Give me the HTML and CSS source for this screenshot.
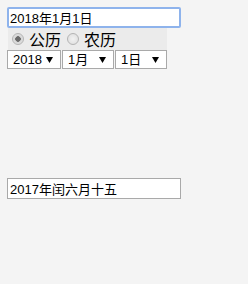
FILE: index.html
```
<!DOCTYPE html>
<html lang="zh">
<head>
  <meta charset="UTF-8" />
  <meta name="viewport" content="width=device-width, initial-scale=1.0"/>
  <link rel="stylesheet" href="styles.css">
</head>
<body>
  <div class="picker">
    <input type="text" class="date-input focused" value="2018年1月1日">
    <div class="calendar-type">
      <label><input type="radio" name="cal" checked>公历</label>
      <label><input type="radio" name="cal">农历</label>
    </div>
    <div class="selects">
      <select class="sel-year"><option>2018</option></select>
      <select class="sel-month"><option>1月</option></select>
      <select class="sel-day"><option>1日</option></select>
    </div>
  </div>
  <div class="lunar">
    <input type="text" class="date-input" value="2017年闰六月十五">
  </div>
</body>
</html>
```
FILE: styles.css
```
body {
  background: #f4f4f4;
  margin: 0;
  padding: 7px;
  font-family: "Liberation Sans", "Noto Sans CJK SC", sans-serif;
  color: #000;
}
.picker {
  width: 174px;
}
.date-input {
  box-sizing: border-box;
  width: 174px;
  height: 21px;
  margin: 0;
  padding: 0 2px;
  font-family: "Liberation Sans", "Noto Sans CJK SC", sans-serif;
  font-size: 13px;
  border: 1px solid #a9a9a9;
  background: #fff;
  color: #000;
  outline: none;
}
.date-input.focused {
  border: 2px solid #8eb3ec;
  border-radius: 2px;
  padding: 0 1px;
}
.calendar-type {
  width: 159px;
  height: 22px;
  margin-left: 1px;
  background: #ebebeb;
  display: flex;
  align-items: center;
  font-size: 16px;
}
.calendar-type label {
  display: flex;
  align-items: center;
  margin-right: 2px;
}
.calendar-type input {
  appearance: none;
  -webkit-appearance: none;
  box-sizing: border-box;
  width: 12px;
  height: 12px;
  margin: 0 5px 0 4px;
  border: 1px solid #b4b4b4;
  border-radius: 50%;
  background: radial-gradient(circle, #f2f2f2 0%, #dcdcdc 100%);
}
.calendar-type input:checked {
  background: radial-gradient(circle, #6a6a6a 0, #6a6a6a 2.5px, #d6d6d6 3px, #e6e6e6 100%);
}
.selects {
  display: flex;
  gap: 1px;
}
.selects select {
  appearance: none;
  -webkit-appearance: none;
  box-sizing: border-box;
  height: 19px;
  margin: 0;
  padding: 0 0 0 5px;
  font-family: "Liberation Sans", "Noto Sans CJK SC", sans-serif;
  font-size: 13px;
  border: 1px solid #a9a9a9;
  border-radius: 0;
  color: #000;
  background: #fff url("data:image/svg+xml,%3Csvg xmlns='http://www.w3.org/2000/svg' width='7' height='6'%3E%3Cpath d='M0 0h7L3.5 6z' fill='%23000'/%3E%3C/svg%3E") no-repeat right 7px center;
}
.sel-year { width: 54px; }
.sel-month { width: 52px; }
.sel-day { width: 52px; }
.lunar {
  margin-top: 109px;
}
```
